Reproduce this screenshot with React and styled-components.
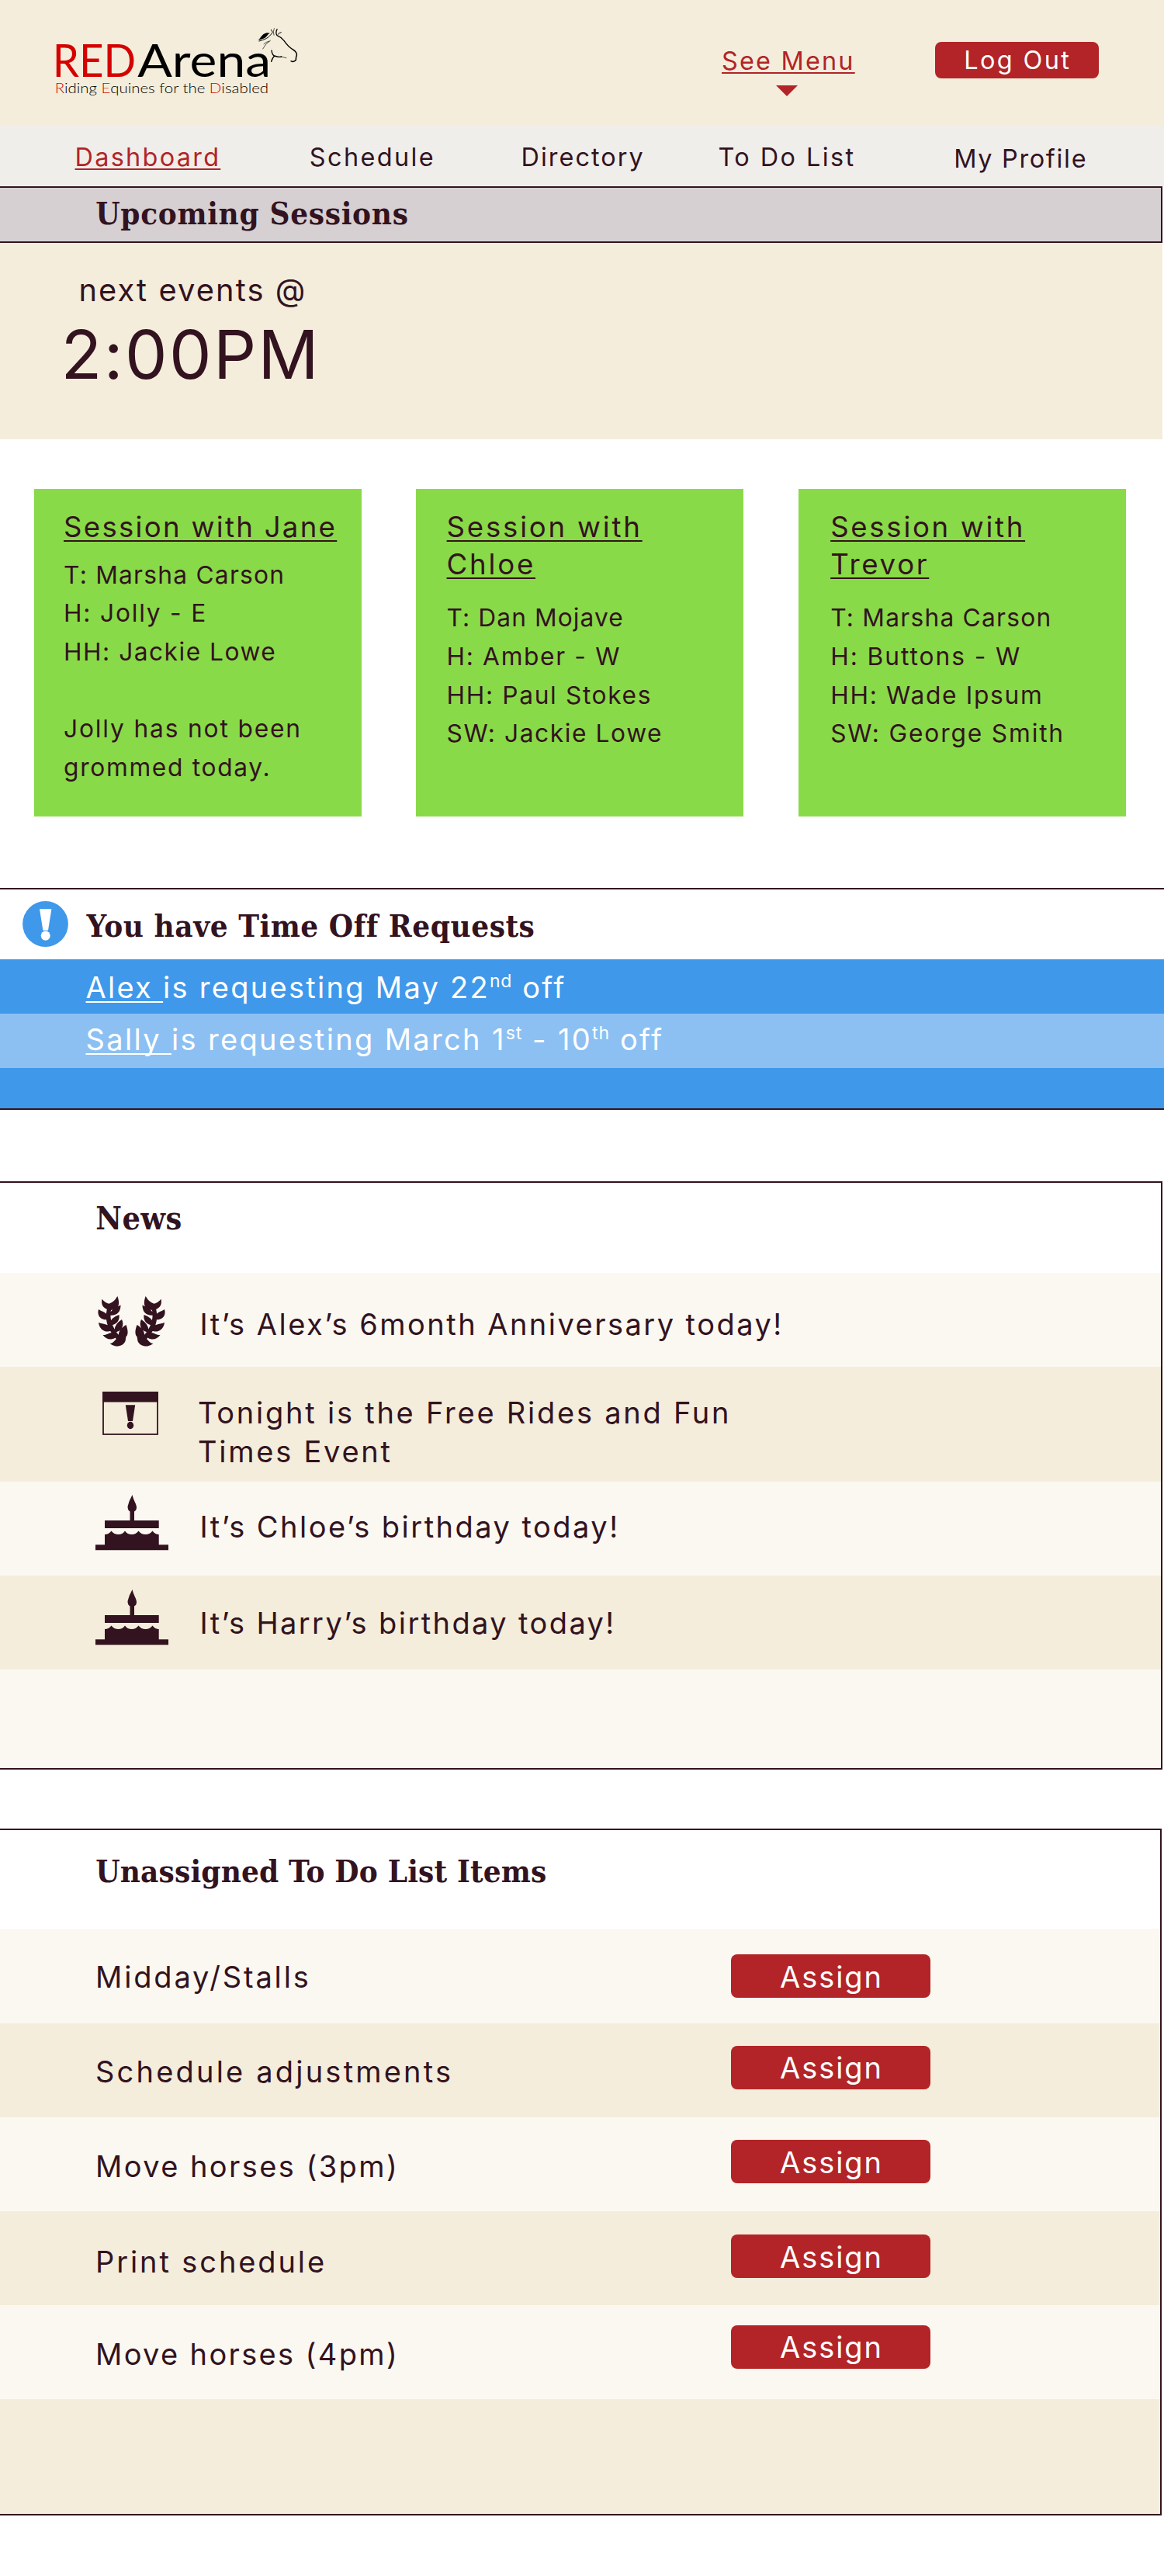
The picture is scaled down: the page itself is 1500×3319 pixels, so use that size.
import React from "react";
import styled, { createGlobalStyle } from "styled-components";

const ink = "#32131f";
const red = "#b22427";
const sand = "#f4eddb";
const cream = "#fbf8f1";
const blue = "#3f98ea";
const skyBlue = "#8cc0f3";

const GlobalStyle = createGlobalStyle`
  *, *::before, *::after { box-sizing: border-box; }
  body {
    margin: 0;
    background: #fff;
    color: ${ink};
    font-family: Inter, "Open Sans", sans-serif;
    font-weight: 400;
  }
  h1, h2, h3, p, ul { margin: 0; padding: 0; font-weight: 400; }
  ul { list-style: none; }
  button { font-family: inherit; border: 0; cursor: pointer; }
  a { color: inherit; }
`;

const Page = styled.main`
  width: 1500px;
  height: 3319px;
  overflow: hidden;
  display: flex;
  flex-direction: column;
`;

const Header = styled.header`
  flex: none;
  height: 162px;
  display: flex;
  align-items: flex-start;
  background: ${sand};
`;

const Logo = styled.svg`
  width: 350px;
  height: 120px;
  margin: 20px 0 0 50px;
  font-family: Lato, sans-serif;
`;

const MenuToggle = styled.div`
  width: 170px;
  margin: 59px 0 0 530px;
  display: flex;
  flex-direction: column;
  align-items: center;
`;

const MenuLink = styled.a`
  width: 100%;
  font-size: 32.4px;
  line-height: 40px;
  letter-spacing: 2.2px;
  white-space: nowrap;
  color: ${red};
  text-decoration: underline 2px;
  text-underline-offset: 3px;
`;

const Caret = styled.span`
  margin: 11px 2px 0 0;
  border: 14px solid transparent;
  border-top-color: ${red};
  border-bottom: 0;
`;

const LogOutButton = styled.button`
  width: 211px;
  height: 47px;
  margin: 54px 0 0 104.5px;
  padding: 1px 0 0 37.7px;
  border-radius: 8px;
  background: ${red};
  color: #fff;
  text-align: left;
  font-size: 32.4px;
  line-height: 40px;
  letter-spacing: 2.4px;
  white-space: nowrap;
`;

const Nav = styled.nav`
  flex: none;
  height: 78px;
  padding: 21px 0 0 96.5px;
  display: grid;
  grid-template-columns: 302.3px 272.7px 254px 303.7px 1fr;
  align-items: start;
  background: #f0eeea;
`;

const NavLink = styled.a`
  justify-self: start;
  margin-top: ${(p) => p.$drop || 0}px;
  font-size: 32.4px;
  line-height: 40px;
  letter-spacing: ${(p) => p.$track}px;
  white-space: nowrap;
  color: ${(p) => (p.$active ? red : ink)};
  text-decoration: ${(p) => (p.$active ? "underline 2px" : "none")};
  text-underline-offset: 3px;
`;

const Heading = styled.h2`
  font-family: "DejaVu Serif Condensed", "DejaVu Serif", serif;
  font-stretch: condensed;
  font-weight: 700;
  font-size: ${(p) => p.$size || 40}px;
  line-height: 50px;
  letter-spacing: ${(p) => p.$track}px;
  white-space: nowrap;
`;

const TitleBar = styled.div`
  flex: none;
  width: 1498px;
  height: 73px;
  padding: 8px 0 0 123.2px;
  border: 2px solid ${ink};
  border-left: 0;
  background: #d6d0d2;
`;

const NextEvents = styled.section`
  flex: none;
  width: 1498px;
  height: 253px;
  padding: 36px 0 0 78.5px;
  background: ${sand};
`;

const NextLabel = styled.p`
  margin-left: 23px;
  font-size: 39.8px;
  line-height: 50px;
  letter-spacing: 2.1px;
`;

const NextTime = styled.p`
  margin-top: 13px;
  font-size: 86.5px;
  line-height: 90px;
  letter-spacing: 2.4px;
`;

const Cards = styled.section`
  flex: none;
  margin: 64.4px 0 0 44px;
  display: flex;
  gap: 70.4px;
`;

const Card = styled.article`
  width: 422px;
  height: 421.6px;
  padding: 25px 18px 0 ${(p) => p.$inset}px;
  background: #89da48;
`;

const CardTitle = styled.h3`
  font-size: 36.6px;
  line-height: 48px;
  letter-spacing: ${(p) => p.$track}px;
  text-decoration: underline 2px;
  text-underline-offset: 4px;
`;

const CardLines = styled.ul`
  margin-top: ${(p) => p.$gap}px;
`;

const CardLine = styled.li`
  height: 49.7px;
  font-size: 31.7px;
  line-height: 49.7px;
  letter-spacing: ${(p) => p.$track || 1.8}px;
  white-space: nowrap;
`;

const TimeOff = styled.section`
  flex: none;
  margin-top: 91.7px;
  border: solid ${ink};
  border-width: 2px 0;
`;

const TimeOffHead = styled.div`
  height: 90.6px;
  padding: 0 0 0 29px;
  display: flex;
  align-items: center;
  gap: 23.5px;
  ${Heading} { padding-top: 5px; }
`;

const RequestRow = styled.div`
  height: ${(p) => p.$height}px;
  padding: ${(p) => p.$top || 0}px 0 0 110.5px;
  background: ${(p) => (p.$light ? skyBlue : blue)};
  color: #fff;
  font-size: 38px;
  line-height: 50px;
  letter-spacing: ${(p) => p.$track || 2.3}px;
  white-space: pre;
`;

const Person = styled.a`
  text-decoration: underline 2px;
  text-underline-offset: 4px;
  text-decoration-skip-ink: none;
`;

const Ordinal = styled.sup`
  font-size: 23px;
  line-height: 0;
  letter-spacing: 0.8px;
  vertical-align: 13.6px;
`;

const Panel = styled.section`
  flex: none;
  width: ${(p) => p.$width}px;
  margin-top: ${(p) => p.$gap}px;
  border: 2px solid ${ink};
  border-left: 0;
`;

const PanelHead = styled.div`
  height: ${(p) => p.$height}px;
  padding: ${(p) => p.$top}px 0 0 123.2px;
`;

const PanelRow = styled.div`
  height: ${(p) => p.$height || 121.2}px;
  padding-left: 123px;
  display: grid;
  grid-template-columns: ${(p) => p.$columns || "134.5px 770px"};
  align-items: start;
  background: ${(p) => (p.$shade ? sand : cream)};
`;

const IconCell = styled.div`
  display: flex;
  padding: ${(p) => p.$top}px 0 0 ${(p) => p.$left || 0}px;
`;

const RowText = styled.p`
  margin: ${(p) => p.$top}px 0 0 ${(p) => p.$shift || 0}px;
  font-size: 38px;
  line-height: 50px;
  letter-spacing: ${(p) => p.$track}px;
`;

const AssignButton = styled.button`
  width: 257px;
  height: 56.3px;
  margin-top: ${(p) => p.$top}px;
  padding: 1px 0 0 63px;
  border-radius: 8px;
  background: ${red};
  color: #fff;
  text-align: left;
  font-size: 38px;
  line-height: 50px;
  letter-spacing: 1.95px;
`;

function RedArenaLogo() {
  return (
    <Logo viewBox="0 0 1050 360" role="img" aria-label="RED Arena">
      <text x="53" y="236" fontSize="172" fill="#d50000" textLength="322" lengthAdjust="spacingAndGlyphs">RED</text>
      <text x="382" y="236" fontSize="172" fill="#000" textLength="515" lengthAdjust="spacingAndGlyphs">Arena</text>
      <text x="62" y="300" fontSize="53" fontWeight="300" fill="#000" textLength="826" lengthAdjust="spacingAndGlyphs">
        <tspan fill="#d50000">R</tspan>iding <tspan fill="#d50000">E</tspan>quines for the <tspan fill="#d50000">D</tspan>isabled
      </text>
      <path d="M845 97 C858 92 860 70 882 67 L894 68 C884 70 884 84 866 90 Z" fill="#000" />
      <g fill="none" stroke="#000" strokeLinecap="round" strokeLinejoin="round">
        <path d="M852 99 C872 93 884 88 892 79 Q900 72 904 64 L898 55" strokeWidth="3" />
        <path d="M910 50 Q904 62 909 76 M895 97 Q876 108 866 129 M891 99 Q878 102 870 110" strokeWidth="2" />
        <path d="M921 53 Q914 68 921 77 Q936 83 948 97 Q962 119 986 134" strokeWidth="4" />
        <path d="M924 73 Q930 66 937 65" strokeWidth="3" />
        <path d="M986 134 Q999 144 997 154 Q994 158 994 172 Q985 182 975 176" strokeWidth="4.5" />
        <path d="M900 135 Q901 150 911 157 Q903 163 899 178 M911 156 Q928 162 938 159" strokeWidth="4" />
        <path d="M938 159 L957 164" strokeWidth="2" />
      </g>
    </Logo>
  );
}

function AlertIcon() {
  return (
    <svg width="59" height="59" viewBox="0 0 59 59" aria-hidden="true">
      <circle cx="29.5" cy="29.5" r="29.4" fill={blue} />
      <path d="M22 10.3 H37.4 L33 37.7 H26.4 Z" fill="#fff" />
      <ellipse cx="29.7" cy="44.6" rx="6" ry="6.2" fill="#fff" />
    </svg>
  );
}

const laurelBranch =
  "M25.3 0 C28 7 29 16 19 17.5 L15 18.5 C5 15 4.5 10 5.4 3.7 Q9.5 8.5 14.5 9.7 Q21 8 25.3 0Z" +
  "M29.5 11.5 C29.5 21 24 26 14 24.5 Q17 17 29.5 11.5Z" +
  "M1 17 C5 20 12 20 14.5 29 L14 30 C4 32 -1.5 25 1 17Z" +
  "M27.5 24 C28.5 31 25 37 15.5 37.5 Q15 28 27.5 24Z" +
  "M1 34 C9 37 14 35 19 43 C12 49 2 44 1 34Z" +
  "M31 30 C34.5 37 31 46 22 46.5 Q20 37 31 30Z" +
  "M6.5 50 C13 51 17 43 26 49 C22 58 11 57 6.5 50Z" +
  "M36.5 37 C39.5 45 39 50 36.5 52 L35.5 58 C34 62 29 65 23 64.5 Q19 64 15.5 61 C21 61 22 55 27 53 C26 45 30 41 36.5 37Z" +
  "M12 16 L18 15 C13 28 20 44 31 54 L27 58 C14 46 8 32 12 16Z";

function LaurelIcon() {
  return (
    <svg width="87" height="66" viewBox="0 0 87 66" fill={ink} aria-hidden="true">
      <path d={laurelBranch} />
      <path d={laurelBranch} transform="translate(87 0) scale(-1 1)" />
    </svg>
  );
}

function CalendarIcon() {
  return (
    <svg width="72" height="56" viewBox="0 0 72 56" aria-hidden="true">
      <rect x="1" y="1" width="70" height="54" fill="none" stroke={ink} strokeWidth="1.8" />
      <rect x="0" y="0" width="72" height="13.5" fill={ink} />
      <path d="M29.8 17.3 H42.2 L39 38 H33 Z" fill={ink} />
      <ellipse cx="36" cy="43.5" rx="4.2" ry="4.7" fill={ink} />
    </svg>
  );
}

function CakeIcon() {
  return (
    <svg width="94" height="72" viewBox="0 0 94 72" fill={ink} aria-hidden="true">
      <path d="M47.5 0 C49 7 53 12 53 16 Q53 20 50 21.5 V33 H81.7 V43 H12 V33 H44.5 V21.5 Q41.5 20 41.5 15 Q43 8 47.5 0Z" />
      <path d="M12 51 Q17 51 20.5 46.5 Q24 51 29.5 51 Q35 51 38 46.5 Q41 51 47 51 Q52 51 55.5 46.5 Q59 51 64.5 51 Q70 51 73.5 46.5 Q77 51 81.7 51 V64.3 H94 V71.3 H0 V64.3 H12Z" />
    </svg>
  );
}

const navItems = [
  { label: "Dashboard", track: 2.3, active: true },
  { label: "Schedule", track: 2.4 },
  { label: "Directory", track: 2.05 },
  { label: "To Do List", track: 2.45 },
  { label: "My Profile", track: 1.7, drop: 2 },
];

const sessions = [
  {
    title: "Session with Jane", track: 2.3, inset: 38, gap: 12.2,
    lines: [["T: Marsha Carson", 1.25], ["H: Jolly - E", 1.8], ["HH: Jackie Lowe", 1.5], ["", 1], ["Jolly has not been", 1.85], ["grommed today.", 1.7]],
  },
  {
    title: "Session with Chloe", track: 2.8, inset: 39.2, gap: 20,
    lines: [["T: Dan Mojave", 1.1], ["H: Amber - W", 1.65], ["HH: Paul Stokes", 1.65], ["SW: Jackie Lowe", 1.6]],
  },
  {
    title: "Session with Trevor", track: 2.7, inset: 41.4, gap: 20,
    lines: [["T: Marsha Carson", 1.25], ["H: Buttons - W", 1.95], ["HH: Wade Ipsum", 1.7], ["SW: George Smith", 1.85]],
  },
];

const news = [
  { text: "It’s Alex’s 6month Anniversary today!", track: 2.47, height: 121, top: 41, Icon: LaurelIcon, iconTop: 30, iconLeft: 3 },
  { text: "Tonight is the Free Rides and Fun Times Event", track: 2.76, height: 148, top: 34.5, shift: -2.5, Icon: CalendarIcon, iconTop: 32.7, iconLeft: 9 },
  { text: "It’s Chloe’s birthday today!", track: 2.48, height: 121.5, top: 33, Icon: CakeIcon, iconTop: 17 },
  { text: "It’s Harry’s birthday today!", track: 2.4, height: 121.2, top: 35.4, Icon: CakeIcon, iconTop: 17.8 },
];

const todos = [
  { text: "Midday/Stalls", track: 2.85, top: 36.2, buttonTop: 32.8 },
  { text: "Schedule adjustments", track: 3.2, top: 37.8, buttonTop: 29.3 },
  { text: "Move horses (3pm)", track: 2.42, top: 38.2, buttonTop: 29.3 },
  { text: "Print schedule", track: 2.9, top: 40, buttonTop: 30 },
  { text: "Move horses (4pm)", track: 2.35, top: 38.3, buttonTop: 25.7 },
];

export default function App() {
  return (
    <Page>
      <GlobalStyle />
      <Header>
        <RedArenaLogo />
        <MenuToggle>
          <MenuLink>See Menu</MenuLink>
          <Caret />
        </MenuToggle>
        <LogOutButton>Log Out</LogOutButton>
      </Header>

      <Nav>
        {navItems.map((item) => (
          <NavLink key={item.label} $track={item.track} $active={item.active} $drop={item.drop}>
            {item.label}
          </NavLink>
        ))}
      </Nav>

      <TitleBar>
        <Heading $track={0.7}>Upcoming Sessions</Heading>
      </TitleBar>
      <NextEvents>
        <NextLabel>next events @</NextLabel>
        <NextTime>2:00PM</NextTime>
      </NextEvents>

      <Cards>
        {sessions.map((session) => (
          <Card key={session.title} $inset={session.inset}>
            <CardTitle $track={session.track}>{session.title}</CardTitle>
            <CardLines $gap={session.gap}>
              {session.lines.map(([line, track], i) => (
                <CardLine key={i} $track={track}>{line}</CardLine>
              ))}
            </CardLines>
          </Card>
        ))}
      </Cards>

      <TimeOff>
        <TimeOffHead>
          <AlertIcon />
          <Heading $track={0.55}>You have Time Off Requests</Heading>
        </TimeOffHead>
        <RequestRow $height={69.7} $top={11} $track={2.28}>
          <Person>Alex </Person>is requesting May 22<Ordinal>nd</Ordinal> off
        </RequestRow>
        <RequestRow $height={70.1} $top={7.8} $track={2.35} $light>
          <Person>Sally </Person>is requesting March 1<Ordinal>st</Ordinal> - 10<Ordinal>th</Ordinal> off
        </RequestRow>
        <RequestRow $height={52.3} />
      </TimeOff>

      <Panel $width={1498} $gap={91.3}>
        <PanelHead $height={116} $top={21.5}>
          <Heading $track={0.5} $size={41}>News</Heading>
        </PanelHead>
        {news.map(({ text, track, height, top, shift, Icon, iconTop, iconLeft }, i) => (
          <PanelRow key={text} $height={height} $shade={i % 2 === 1}>
            <IconCell $top={iconTop} $left={iconLeft}><Icon /></IconCell>
            <RowText $top={top} $track={track} $shift={shift}>{text}</RowText>
          </PanelRow>
        ))}
        <PanelRow $height={126.3} />
      </Panel>

      <Panel $width={1497} $gap={76}>
        <PanelHead $height={127.7} $top={28}>
          <Heading $track={0.18}>Unassigned To Do List Items</Heading>
        </PanelHead>
        {todos.map((todo, i) => (
          <PanelRow key={todo.text} $columns="819px 257px" $shade={i % 2 === 1}>
            <RowText $top={todo.top} $track={todo.track}>{todo.text}</RowText>
            <AssignButton $top={todo.buttonTop}>Assign</AssignButton>
          </PanelRow>
        ))}
        <PanelRow $height={147.3} $shade />
      </Panel>
    </Page>
  );
}
